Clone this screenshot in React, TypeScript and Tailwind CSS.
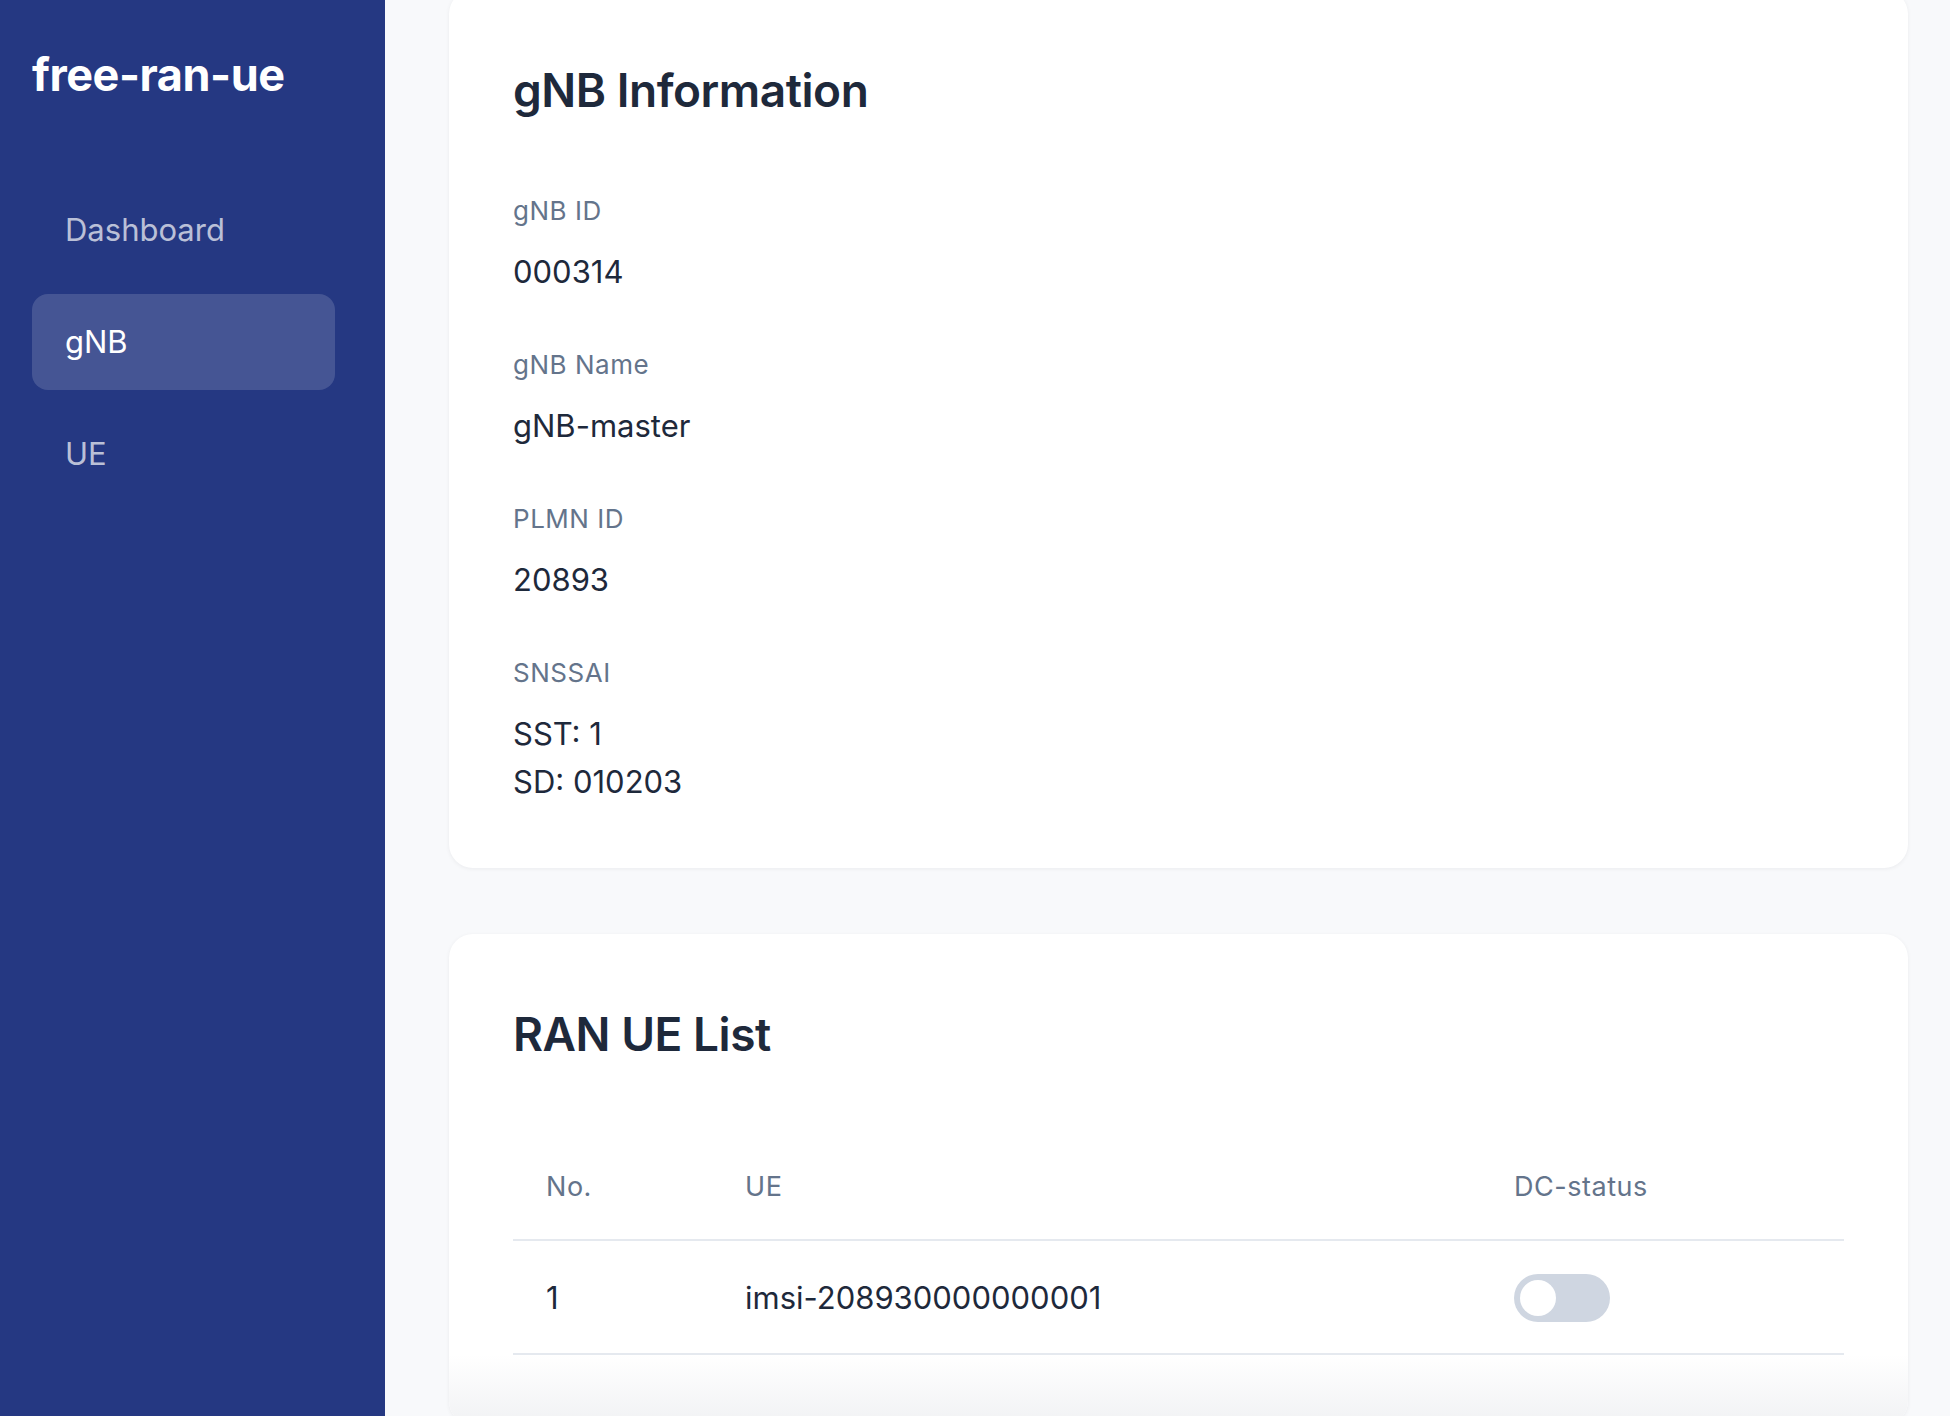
import { useState } from 'react';

const navItems = ['Dashboard', 'gNB', 'UE'];

const fields: { label: string; value: string[] }[] = [
  { label: 'gNB ID', value: ['000314'] },
  { label: 'gNB Name', value: ['gNB-master'] },
  { label: 'PLMN ID', value: ['20893'] },
  { label: 'SNSSAI', value: ['SST: 1', 'SD: 010203'] },
];

const ues = [{ no: 1, imsi: 'imsi-208930000000001', dc: false }];

function Toggle({ on }: { on: boolean }) {
  const [checked, setChecked] = useState(on);
  return (
    <button
      onClick={() => setChecked((c) => !c)}
      className={`flex items-center w-[96px] h-[48px] rounded-full px-[6px] ${checked ? 'bg-[#2f45a0] justify-end' : 'bg-[#cfd6e1] justify-start'}`}
    >
      <span className="block w-[36px] h-[36px] rounded-full bg-white" />
    </button>
  );
}

export default function App() {
  const active = 'gNB';

  return (
    <div
      className="flex h-[1416px] overflow-hidden bg-[#f8f9fb]"
      style={{ fontFamily: 'Inter, "Noto Sans", sans-serif' }}
    >
      {/* Sidebar */}
      <aside className="w-[385px] flex-shrink-0 bg-[#253882] pt-[47px] pl-[32px]">
        <div className="text-white text-[45px] leading-[56px] font-bold tracking-[-0.01em]">free-ran-ue</div>
        <nav className="mt-[79px] flex flex-col gap-[16px]">
          {navItems.map((item) => (
            <div
              key={item}
              className={`flex items-center w-[303px] h-[96px] rounded-[16px] pl-[33px] text-[31px] leading-[40px] ${
                item === active ? 'bg-white/15 text-white' : 'text-white/70'
              }`}
            >
              {item}
            </div>
          ))}
        </nav>
      </aside>

      {/* Main */}
      <main className="flex-1 pl-[64px] pr-[42px]">
        {/* gNB info card */}
        <section className="-mt-[10px] bg-white rounded-[24px] shadow-[0_1px_4px_rgba(15,23,42,0.06)] px-[64px] pt-[75px] pb-[62px]">
          <h2 className="text-[#1e293b] text-[46px] leading-[50px] font-semibold tracking-[-0.01em]">gNB Information</h2>
          <div className="mt-[80px] flex flex-col gap-[53px]">
            {fields.map((f) => (
              <div key={f.label}>
                <div className="text-[#64748b] text-[26px] leading-[32px] tracking-[0.02em]">{f.label}</div>
                <div className="mt-[21px] text-[#1e293b] text-[31px] leading-[48px]">
                  {f.value.map((v) => (
                    <div key={v}>{v}</div>
                  ))}
                </div>
              </div>
            ))}
          </div>
        </section>

        {/* RAN UE list card */}
        <section className="mt-[66px] bg-white rounded-[24px] shadow-[0_1px_4px_rgba(15,23,42,0.06)] pt-[75px] overflow-hidden">
          <div className="px-[64px]">
            <h2 className="text-[#1e293b] text-[46px] leading-[50px] font-semibold tracking-[-0.01em]">RAN UE List</h2>
            <div className="mt-[70px]">
              <div className="grid grid-cols-[200px_1fr_362px] h-[112px] items-center pt-[6px] border-b-2 border-[#e5e9ef] text-[#64748b] text-[27px] tracking-[0.02em]">
                <div className="pl-[33px]">No.</div>
                <div className="pl-[32px]">UE</div>
                <div className="pl-[32px]">DC-status</div>
              </div>
              {ues.map((ue) => (
                <div
                  key={ue.imsi}
                  className="grid grid-cols-[200px_1fr_362px] h-[114px] items-center pt-[2px] border-b-2 border-[#e5e9ef] text-[#1e293b] text-[31px]"
                >
                  <div className="pl-[33px]">{ue.no}</div>
                  <div className="pl-[32px]">{ue.imsi}</div>
                  <div className="pl-[32px]">
                    <Toggle on={ue.dc} />
                  </div>
                </div>
              ))}
            </div>
          </div>
          <div className="h-[70px] bg-linear-to-b from-white to-[#f1f2f4]" />
        </section>
      </main>
    </div>
  );
}
